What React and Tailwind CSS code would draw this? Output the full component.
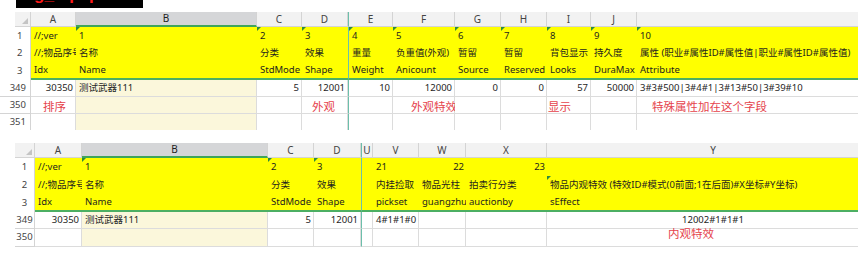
import clsx from "clsx";

const FONT = { fontFamily: '"Noto Sans", "Noto Sans CJK SC", sans-serif' };

const TOP_COLS = [
  { k: "A", w: "w-[45px]" },
  { k: "B", w: "w-[181px]", sel: true },
  { k: "C", w: "w-[45px]" },
  { k: "D", w: "w-[46px]" },
  { k: "E", w: "w-[45px]", frozen: true },
  { k: "F", w: "w-[62px]" },
  { k: "G", w: "w-[46px]" },
  { k: "H", w: "w-[46px]" },
  { k: "I", w: "w-[44px]" },
  { k: "J", w: "w-[46px]" },
  { k: "", w: "w-[460px]" },
];

const BOT_COLS = [
  { k: "A", w: "w-[47px]" },
  { k: "B", w: "w-[186px]", sel: true },
  { k: "C", w: "w-[46px]" },
  { k: "D", w: "w-[47px]" },
  { k: "U", w: "w-[12px]", frozen: true },
  { k: "V", w: "w-[46px]" },
  { k: "W", w: "w-[47px]" },
  { k: "X", w: "w-[81px]" },
  { k: "Y", w: "w-[333px]" },
];

// cell shorthand: string = left aligned, {t, r} = right, {t, c} = centre
const TOP_ROWS = [
  { n: "1", h: "h-[18px]", tri: [1, 2, 3, 4, 5, 6, 7, 8, 9, 10], cells: ["//;ver", "1", "2", "3", "4", "5", "6", "7", "8", "9", "10"] },
  {
    n: "2",
    h: "h-[17px]",
    cells: ["//;物品序号", "名称", "分类", "效果", "重量", "负重值(外观)", "暂留", "暂留", "背包显示", "持久度", "属性 (职业#属性ID#属性值|职业#属性ID#属性值)"],
  },
  { n: "3", h: "h-[18px]", last: true, cells: ["Idx", "Name", "StdMode", "Shape", "Weight", "Anicount", "Source", "Reserved", "Looks", "DuraMax", "Attribute"] },
];

const BOT_ROWS = [
  { n: "1", h: "h-[18px]", tri: [1, 2, 3], cells: ["//;ver", "1", "2", "3", "", "21", { t: "22", r: 1 }, { t: "23", r: 1 }, ""] },
  { n: "2", h: "h-[18px]", tri: [8], cells: ["//;物品序号", "名称", "分类", "效果", "", "内挂捡取", "物品光柱", "拍卖行分类", "物品内观特效 (特效ID#模式(0前面;1在后面)#X坐标#Y坐标)"] },
  { n: "3", h: "h-[18px]", last: true, cells: ["Idx", "Name", "StdMode", "Shape", "", "pickset", "guangzhu", "auctionby", "sEffect"] },
];

function Tri() {
  return <span className="absolute left-0 top-0 w-0 h-0 border-t-[4px] border-r-[4px] border-t-[#2d8a3f] border-r-transparent" />;
}

function HeaderRow({ cols, numW, lead }) {
  return (
    <div className="flex h-[15px] text-[10px] text-[#444]">
      {lead && <div className="w-[15px] shrink-0 bg-white" />}
      <div className={clsx("shrink-0 relative bg-[#f2f2f2] border-r border-b border-[#d4d4d4]", numW)}>
        <span className="absolute right-[2px] bottom-[2px] w-0 h-0 border-b-[6px] border-l-[6px] border-b-[#c4c4c4] border-l-transparent" />
      </div>
      {cols.map((c, i) => (
        <div
          key={i}
          className={clsx(
            "shrink-0 flex items-center justify-center border-r border-[#d4d4d4]",
            c.w,
            c.sel ? "bg-[#d5d6d8] border-b-2 border-b-[#3fa55a] text-[#222]" : "bg-[#f2f2f2] border-b border-b-[#d4d4d4]",
            c.frozen && "border-l border-l-[#6cbfab]"
          )}
        >
          {c.k}
        </div>
      ))}
    </div>
  );
}

function YellowRow({ cols, row, numW, numCls, lead }) {
  return (
    <div className={clsx("flex text-[9.5px] text-[#1e1e1e]", row.h)}>
      {lead && <div className="w-[15px] shrink-0" />}
      <div className={clsx("shrink-0 flex items-center text-[#444] bg-white border-r border-[#d4d4d4]", numW, numCls)}>{row.n}</div>
      {cols.map((c, i) => {
        const cell = row.cells[i];
        const t = typeof cell === "string" ? cell : cell.t;
        return (
          <div
            key={i}
            className={clsx(
              "shrink-0 relative flex items-center whitespace-nowrap bg-[#ffff00]",
              c.w,
              typeof cell === "object" && cell.r ? "justify-end pr-[2px]" : "pl-[3px]",
              i === 0 && "overflow-hidden",
              c.frozen && "border-l border-l-[#6cbfab]",
              row.last && "border-b-2 border-b-[#4caf63]"
            )}
          >
            {row.tri && row.tri.includes(i) && <Tri />}
            <span className="relative">{t}</span>
          </div>
        );
      })}
    </div>
  );
}

function DataRow({ cols, cells, h, numW, numCls, n, lead, border = true }) {
  return (
    <div className={clsx("flex text-[9.5px] text-[#1e1e1e]", h)}>
      {lead && <div className="w-[15px] shrink-0" />}
      <div className={clsx("shrink-0 flex items-center text-[#444] bg-white border-r border-[#d4d4d4]", border && "border-b", numW, numCls)}>{n}</div>
      {cols.map((c, i) => {
        const cell = cells[i] || "";
        const t = typeof cell === "string" ? cell : cell.t;
        return (
          <div
            key={i}
            className={clsx(
              "shrink-0 relative flex whitespace-nowrap border-r border-[#dcdcdc]",
              border && "border-b",
              c.w,
              c.sel ? "bg-[#fbf7db]" : "bg-white",
              c.frozen && "border-l border-l-[#6cbfab]",
              typeof cell === "object" && cell.r
                ? "items-center justify-end pr-[2px]"
                : typeof cell === "object" && cell.c
                ? "items-center justify-center"
                : typeof cell === "object" && cell.note
                ? clsx("items-center", cell.note)
                : "items-center pl-[3px]"
            )}
          >
            {typeof cell === "object" && cell.note ? (
              <span className="relative text-[11.5px] text-[#e5434c]" style={{ fontFamily: '"Noto Sans CJK SC", sans-serif' }}>
                {t}
              </span>
            ) : (
              <span className="relative">{t}</span>
            )}
          </div>
        );
      })}
    </div>
  );
}

export default function App() {
  return (
    <div className="w-[858px] h-[260px] overflow-hidden bg-white" style={FONT}>
      {/* file name banner, cut at top */}
      <div className="ml-[16px] w-[127px] h-[8px] bg-black overflow-hidden">
        <div className="mt-[-14px] pl-[3px] text-[17px] leading-[17px] font-bold text-[#ff1a1a]" style={{ fontFamily: '"Liberation Sans", sans-serif' }}>
          cfg_equip.txt
        </div>
      </div>

      {/* upper sheet */}
      <div className="mt-[4px] flex flex-col">
        <HeaderRow cols={TOP_COLS} numW="w-[16px]" lead />
        {TOP_ROWS.map((r) => (
          <YellowRow key={r.n} cols={TOP_COLS} row={r} numW="w-[31px]" numCls="pl-[17px]" />
        ))}
        <DataRow
          cols={TOP_COLS}
          h="h-[17px]"
          n="349"
          numW="w-[31px]"
          numCls="justify-end pr-[4px]"
          cells={[
            { t: "30350", r: 1 },
            "测试武器111",
            { t: "5", r: 1 },
            { t: "12001", r: 1 },
            { t: "10", r: 1 },
            { t: "12000", r: 1 },
            { t: "0", r: 1 },
            { t: "0", r: 1 },
            { t: "57", r: 1 },
            { t: "50000", r: 1 },
            "3#3#500|3#4#1|3#13#50|3#39#10",
          ]}
        />
        <DataRow
          cols={TOP_COLS}
          h="h-[17px]"
          n="350"
          numW="w-[31px]"
          numCls="justify-end pr-[4px]"
          cells={[
            { t: "排序", note: "pl-[12px] pt-[4px]" },
            "",
            "",
            { t: "外观", note: "pl-[10px] pt-[4px]" },
            "",
            { t: "外观特效", note: "pl-[18px] pt-[4px]" },
            "",
            "",
            { t: "显示", note: "pl-[1px] pt-[4px]" },
            "",
            { t: "特殊属性加在这个字段", note: "pl-[15px] pt-[4px]" },
          ]}
        />
        <DataRow cols={TOP_COLS} h="h-[16px]" n="351" numW="w-[31px]" numCls="justify-end pr-[4px]" cells={[]} border={false} />
      </div>

      {/* lower sheet */}
      <div className="mt-[13px] flex flex-col">
        <HeaderRow cols={BOT_COLS} numW="w-[20px]" lead />
        {BOT_ROWS.map((r) => (
          <YellowRow key={r.n} cols={BOT_COLS} row={r} numW="w-[20px]" numCls="justify-center" lead />
        ))}
        <DataRow
          cols={BOT_COLS}
          h="h-[17px]"
          n="349"
          lead
          numW="w-[20px]"
          numCls="justify-center"
          cells={[{ t: "30350", r: 1 }, "测试武器111", { t: "5", r: 1 }, { t: "12001", r: 1 }, "", "4#1#1#0", "", "", { t: "12002#1#1#1", c: 1 }]}
        />
        <DataRow
          cols={BOT_COLS}
          h="h-[18px]"
          n="350"
          lead
          numW="w-[20px]"
          numCls="justify-center"
          cells={["", "", "", "", "", "", "", "", { t: "内观特效", note: "pl-[121px] pb-[8px]" }]}
        />
      </div>
    </div>
  );
}
